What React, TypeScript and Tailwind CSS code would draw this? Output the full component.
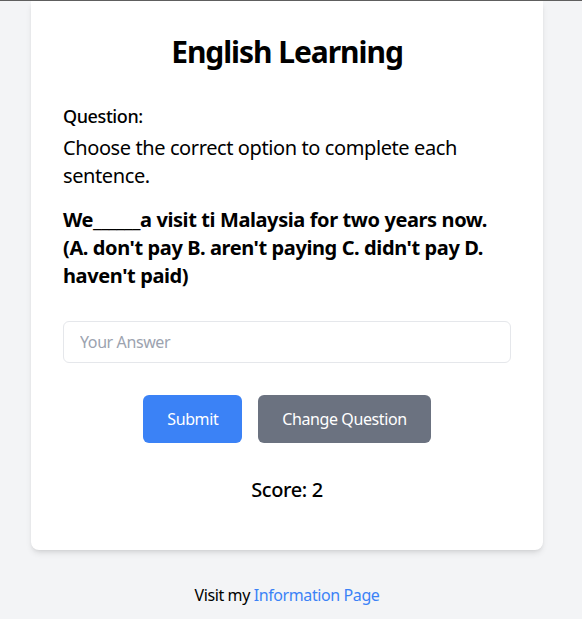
import React from "react";

export default function App() {
  return (
    <div
      className="min-h-[619px] bg-[#f3f4f6] border-t border-[#5f5f5f] flex flex-col items-center pr-2 tracking-[-0.025em]"
      style={{ fontFamily: '"Noto Sans", "Open Sans", sans-serif' }}
    >
      <div className="w-[512px] bg-white rounded-b-lg shadow-md px-8 pt-[33px] pb-[46px]">
        <h1 className="text-3xl font-bold text-center text-black leading-9 mb-8 tracking-[-0.035em]">English Learning</h1>
        <p className="text-lg font-medium text-black leading-7 mb-1">Question:</p>
        <p className="text-xl text-black leading-7 mb-4">Choose the correct option to complete each sentence.</p>
        <p className="text-xl font-bold text-black leading-7 mt-[1px] tracking-[-0.02em]">
          We______a visit ti Malaysia for two years now.
          <br />
          (A. don't pay B. aren't paying C. didn't pay D. haven't paid)
        </p>
        <input
          type="text"
          placeholder="Your Answer"
          className="mt-[31px] w-full h-[42px] px-4 border border-[#e5e7eb] rounded-md text-base placeholder-[#9ca3af] outline-none tracking-[-0.025em]"
        />
        <div className="mt-8 flex justify-center gap-4">
          <button className="bg-[#3b82f6] text-white text-base px-6 h-12 rounded-md tracking-[-0.025em]">Submit</button>
          <button className="bg-[#6b7280] text-white text-base px-6 h-12 rounded-md tracking-[-0.025em]">Change Question</button>
        </div>
        <p className="mt-[33px] text-xl font-medium text-center text-black leading-7">Score: 2</p>
      </div>
      <p className="mt-[33px] text-base text-black leading-6">
        Visit my <a className="text-[#3b82f6]">Information Page</a>
      </p>
    </div>
  );
}
